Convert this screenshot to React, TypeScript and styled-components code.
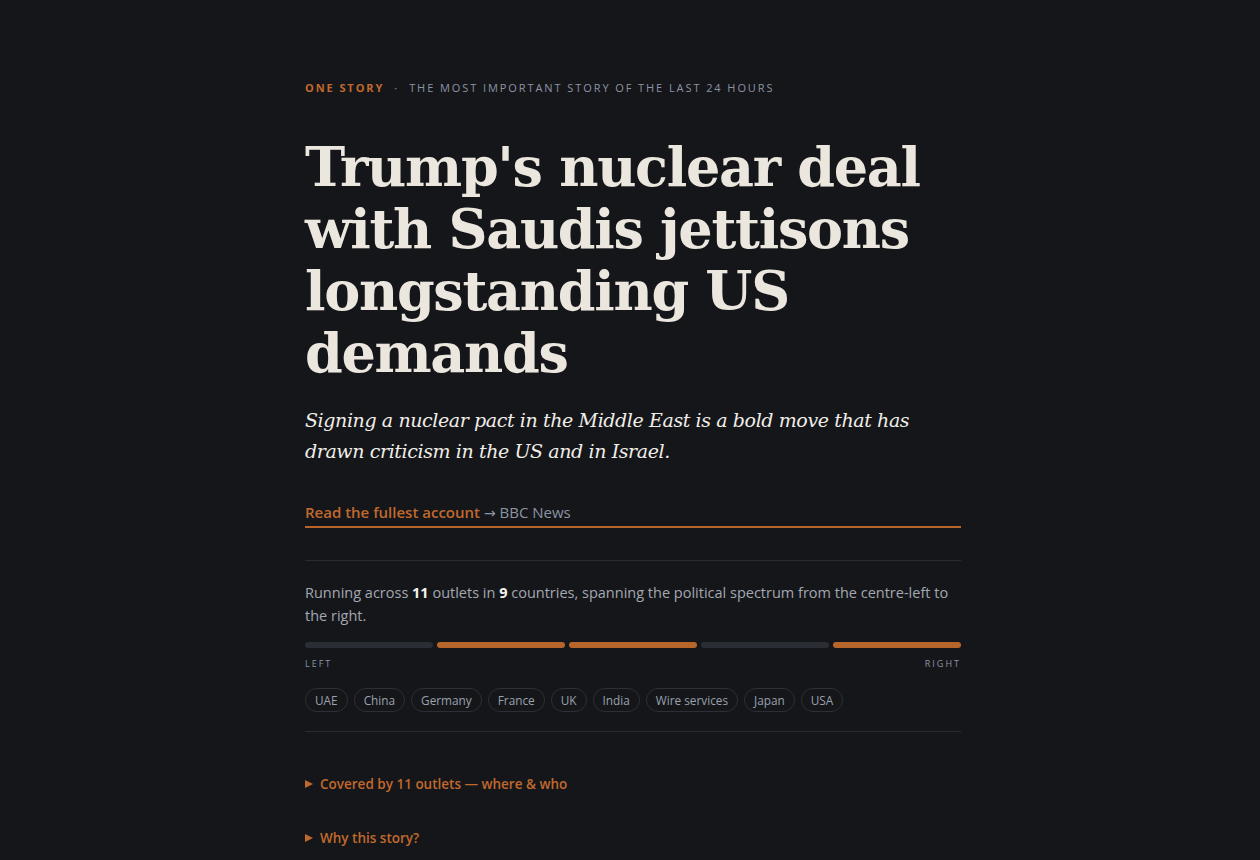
import React from "react";
import styled, { createGlobalStyle } from "styled-components";

const Global = createGlobalStyle`
  html, body { margin: 0; padding: 0; background: #15161a; }
  body { font-family: "Open Sans", "Noto Sans", sans-serif; color: #e9e6df; }
`;

const Page = styled.div`
  min-height: 860px;
  padding: 78px 0 0 6px;
  box-sizing: border-box;
`;

const Column = styled.main`
  width: 656px;
  margin: 0 auto;
`;

const Kicker = styled.div`
  display: flex;
  align-items: center;
  gap: 10px;
  font-size: 11px;
  letter-spacing: 1.92px;
  text-transform: uppercase;
  color: #8b94a3;
  line-height: 20px;
`;

const KickerStrong = styled.span`
  color: #c0692d;
  font-weight: 700;
`;

const Headline = styled.h1`
  margin: 38px 0 0;
  font-family: "DejaVu Serif", Georgia, serif;
  font-weight: 700;
  font-size: 54px;
  line-height: 62px;
  letter-spacing: -1.3px;
  color: #ebe7df;
`;

const Dek = styled.p`
  margin: 21px 0 0;
  font-family: "DejaVu Serif", Georgia, serif;
  font-style: italic;
  font-size: 19px;
  line-height: 31px;
  letter-spacing: -0.4px;
  color: #f1eee8;
`;

const ReadLink = styled.a`
  display: block;
  margin-top: 34px;
  padding-bottom: 2px;
  border-bottom: 2px solid #b8652c;
  font-size: 15px;
  line-height: 22px;
  color: #c0692d;
  font-weight: 600;
  text-decoration: none;
`;

const Source = styled.span`
  color: #8b94a3;
  font-weight: 400;
`;

const Arrow = styled.span`
  font-family: "DejaVu Sans", sans-serif;
  font-size: 14px;
  color: #8b94a3;
  font-weight: 400;
`;

const Divider = styled.hr<{ $top: number }>`
  border: 0;
  border-top: 1px solid #2a2c31;
  margin: ${(p) => p.$top}px 0 0;
`;

const Summary = styled.p`
  margin: 20px 0 0;
  font-size: 14.5px;
  line-height: 23px;
  color: #a3a8b1;
`;

const Num = styled.b`
  color: #f4f2ee;
  font-weight: 700;
`;

const Spectrum = styled.div`
  display: grid;
  grid-template-columns: repeat(5, 1fr);
  gap: 4px;
  margin-top: 15px;
`;

const Bar = styled.div<{ $on: boolean }>`
  height: 6px;
  border-radius: 3px;
  background: ${(p) => (p.$on ? "#b8652c" : "#2a2d34")};
`;

const Ends = styled.div`
  display: flex;
  justify-content: space-between;
  margin-top: 8px;
  font-size: 9px;
  letter-spacing: 2px;
  color: #8b94a3;
  line-height: 16px;
`;

const Chips = styled.div`
  display: flex;
  flex-wrap: wrap;
  gap: 6px;
  margin-top: 16px;
`;

const Chip = styled.span`
  display: inline-flex;
  align-items: center;
  height: 24px;
  padding: 0 9px;
  box-sizing: border-box;
  border: 1px solid #2c2f36;
  border-radius: 12px;
  font-size: 11.8px;
  color: #9aa2ae;
`;

const Toggle = styled.div<{ $top: number }>`
  display: flex;
  align-items: center;
  gap: 7px;
  font-size: 13.5px;
  font-weight: 600;
  color: #c0692d;
  line-height: 20px;
  margin-top: ${(p) => p.$top}px;
`;

const Tri = styled.span`
  width: 0;
  height: 0;
  border-top: 4.5px solid transparent;
  border-bottom: 4.5px solid transparent;
  border-left: 8px solid #c0692d;
`;

const bars = [false, true, true, false, true];
const countries = ["UAE", "China", "Germany", "France", "UK", "India", "Wire services", "Japan", "USA"];

export default function App() {
  return (
    <>
      <Global />
      <Page>
        <Column>
          <Kicker>
            <KickerStrong>One Story</KickerStrong>
            <span>·</span>
            <span>The most important story of the last 24 hours</span>
          </Kicker>
          <Headline>Trump's nuclear deal with Saudis jettisons longstanding US demands</Headline>
          <Dek>Signing a nuclear pact in the Middle East is a bold move that has drawn criticism in the US and in Israel.</Dek>
          <ReadLink href="#">
            Read the fullest account <Arrow>→</Arrow> <Source>BBC News</Source>
          </ReadLink>
          <Divider $top={32} />
          <Summary>
            Running across <Num>11</Num> outlets in <Num>9</Num> countries, spanning the political spectrum from the centre-left to the right.
          </Summary>
          <Spectrum>
            {bars.map((on, i) => (
              <Bar key={i} $on={on} />
            ))}
          </Spectrum>
          <Ends>
            <span>LEFT</span>
            <span>RIGHT</span>
          </Ends>
          <Chips>
            {countries.map((c) => (
              <Chip key={c}>{c}</Chip>
            ))}
          </Chips>
          <Divider $top={19} />
          <Toggle $top={42}>
            <Tri />
            Covered by 11 outlets — where &amp; who
          </Toggle>
          <Toggle $top={34}>
            <Tri />
            Why this story?
          </Toggle>
        </Column>
      </Page>
    </>
  );
}
